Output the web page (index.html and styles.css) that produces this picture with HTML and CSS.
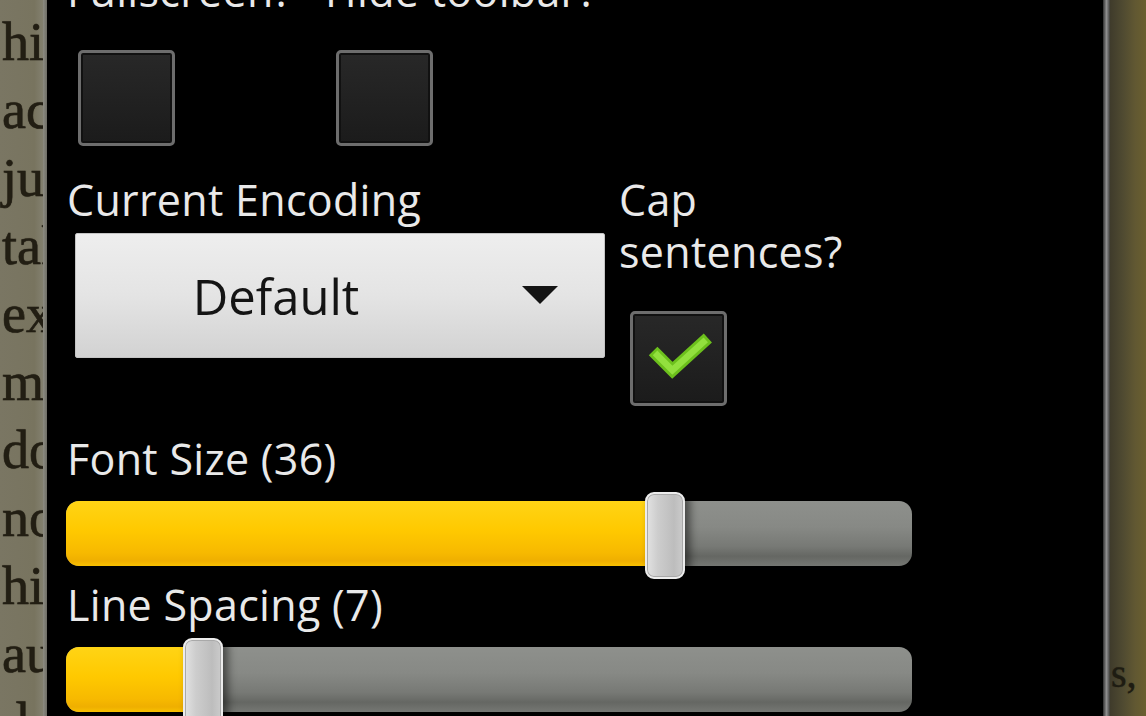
FILE: index.html
```html
<!DOCTYPE html>
<html lang="en">
<head>
<meta charset="utf-8">
<title>Reader settings</title>
<link rel="stylesheet" href="styles.css">
</head>
<body>
<div class="screen">
  <div class="page page-left">
    <p class="bookline">his</p>
    <p class="bookline">across</p>
    <p class="bookline">just</p>
    <p class="bookline">take</p>
    <p class="bookline">ex</p>
    <p class="bookline">m&nbsp;&nbsp;&nbsp;</p>
    <p class="bookline">done</p>
    <p class="bookline">none</p>
    <p class="bookline">his</p>
    <p class="bookline">aut</p>
    <p class="bookline">&nbsp;l</p>
  </div>
  <div class="edge edge-left"></div>
  <main class="dialog">
    <div class="dialog-body">
      <div class="row-toggles">
        <div class="opt">
          <div class="label">Fullscreen?</div>
          <div class="checkbox"></div>
        </div>
        <div class="opt">
          <div class="label">Hide toolbar?</div>
          <div class="checkbox"></div>
        </div>
      </div>
      <div class="row-encoding">
        <div class="opt">
          <div class="label">Current Encoding</div>
          <div class="dropdown">
            <span class="dd-text">Default</span>
            <span class="dd-arrow"></span>
          </div>
        </div>
        <div class="opt">
          <div class="label">Cap<br>sentences?</div>
          <div class="checkbox checked">
            <svg class="tick" viewBox="0 0 97 96" width="91" height="90" aria-hidden="true">
              <polyline points="26,44 42,60 75,30" fill="none" stroke="#6cc01c" stroke-width="13" stroke-linecap="square" stroke-linejoin="miter"/>
              <polyline points="26,44 42,60 75,30" fill="none" stroke="#92e03e" stroke-width="7" stroke-linecap="square" stroke-linejoin="miter"/>
            </svg>
          </div>
        </div>
      </div>
      <div class="slider-block first">
        <div class="label">Font Size (36)</div>
        <div class="track">
          <div class="fill" style="width:600px"></div>
          <div class="thumb" style="left:579px"></div>
        </div>
      </div>
      <div class="slider-block second">
        <div class="label">Line Spacing (7)</div>
        <div class="track">
          <div class="fill" style="width:140px"></div>
          <div class="thumb" style="left:117px"></div>
        </div>
      </div>
    </div>
  </main>
  <div class="edge edge-right"></div>
  <div class="page page-right">
    <p class="bookline">s,</p>
  </div>
</div>
</body>
</html>
```

FILE: styles.css
```css
html, body {
  margin: 0;
  padding: 0;
  background: #000;
}

.screen {
  display: flex;
  width: 1146px;
  height: 716px;
  overflow: hidden;
}

/* book pages behind the dialog */
.page {
  overflow: hidden;
  font-family: "Liberation Serif", "Times New Roman", serif;
  color: #221e13;
}

.page-left {
  width: 43px;
  flex: none;
  padding-top: 8px;
  padding-left: 2px;
  box-sizing: border-box;
  background: linear-gradient(to right, #7a7663 0%, #78745f 80%, #83806f 100%);
}

.bookline {
  margin: 0;
  font-size: 54px;
  line-height: 68px;
  white-space: nowrap;
  -webkit-text-stroke: 0.6px #221e13;
  text-shadow: 0 0 1px rgba(34, 30, 19, 0.6);
}

.page-right {
  width: 36px;
  flex: none;
  display: flex;
  flex-direction: column;
  justify-content: flex-end;
  padding-bottom: 8px;
  box-sizing: border-box;
  background: linear-gradient(to right, #3f3b2b 0%, #4f4a31 35%, #615832 70%, #6a5f2f 100%);
}

.page-right .bookline {
  font-size: 40px;
  color: #1e1c12;
  -webkit-text-stroke: 0.3px #1e1c12;
  padding-left: 1px;
}

.edge {
  flex: none;
}

.edge-left {
  width: 4px;
  background: linear-gradient(to right, #8d8c82, #6e6d66);
}

.edge-right {
  width: 7px;
  background: linear-gradient(to right, #2e2e2e 0%, #6a6a6a 30%, #8d8d8d 50%, #666 75%, #3c3b34 100%);
}

/* dialog */
.dialog {
  width: 1056px;
  flex: none;
  background: #000;
  padding-left: 20px;
  box-sizing: border-box;
  overflow: hidden;
  font-family: "Open Sans", "Noto Sans", sans-serif;
  color: #e9e9e9;
}

.dialog-body {
  margin-top: -35px;
}

.label {
  font-size: 43px;
  line-height: 52px;
  white-space: nowrap;
  letter-spacing: 0.3px;
}

.row-toggles {
  display: grid;
  grid-template-columns: 258px 1fr;
}

.row-encoding {
  display: grid;
  grid-template-columns: 552px 1fr;
  margin-top: 28px;
}

.checkbox {
  width: 97px;
  height: 96px;
  margin-top: 33px;
  margin-left: 11px;
  box-sizing: border-box;
  border: 3px solid #6d6d6d;
  border-radius: 5px;
  background: linear-gradient(to bottom, #282828, #1b1b1b);
  box-shadow: inset 0 0 0 2px #111;
  display: flex;
  align-items: center;
  justify-content: center;
}

.checkbox.checked {
  height: 95px;
}

.tick {
  display: block;
}

.dropdown {
  width: 530px;
  height: 125px;
  margin-top: 7px;
  margin-left: 8px;
  box-sizing: border-box;
  border: 1px solid #c4c4c4;
  border-radius: 2px;
  background: linear-gradient(to bottom, #eeeeee 0%, #e4e4e4 50%, #d2d2d2 100%);
  display: flex;
  align-items: center;
  color: #141414;
}

.dd-text {
  flex: 1;
  text-align: center;
  font-size: 49px;
  line-height: 60px;
}

.dd-arrow {
  width: 128px;
  height: 20px;
  display: flex;
  justify-content: center;
  flex: none;
}

.dd-arrow::before {
  content: "";
  width: 0;
  height: 0;
  border-left: 18px solid transparent;
  border-right: 18px solid transparent;
  border-top: 18px solid #141414;
}

/* sliders */
.slider-block.first {
  margin-top: 27px;
}

.slider-block.second {
  margin-top: 13px;
}

.slider-block.first .track {
  margin-top: 16px;
}

.slider-block.second .track {
  margin-top: 16px;
}

.track {
  position: relative;
  width: 846px;
  height: 65px;
  margin-left: -1px;
  border-radius: 13px;
  background: linear-gradient(to bottom, #8e908c 0%, #878985 40%, #777975 70%, #656763 85%, #757773 100%);
}

.fill {
  height: 100%;
  border-radius: 13px 0 0 13px;
  background: linear-gradient(to bottom, #ffd415 0%, #ffc900 45%, #f7b900 80%, #efaf00 92%, #f8c000 100%);
}

.thumb {
  position: absolute;
  top: -9px;
  width: 40px;
  height: 87px;
  box-sizing: border-box;
  border: 2px solid #ececec;
  border-radius: 9px;
  background: linear-gradient(to right, #e2e2e2 0%, #cdcdcd 30%, #bdbdbd 75%, #cbcbcb 100%);
  box-shadow: 5px 0 8px rgba(0, 0, 0, 0.5), inset 0 0 0 1px #a9a9a9;
}
```
